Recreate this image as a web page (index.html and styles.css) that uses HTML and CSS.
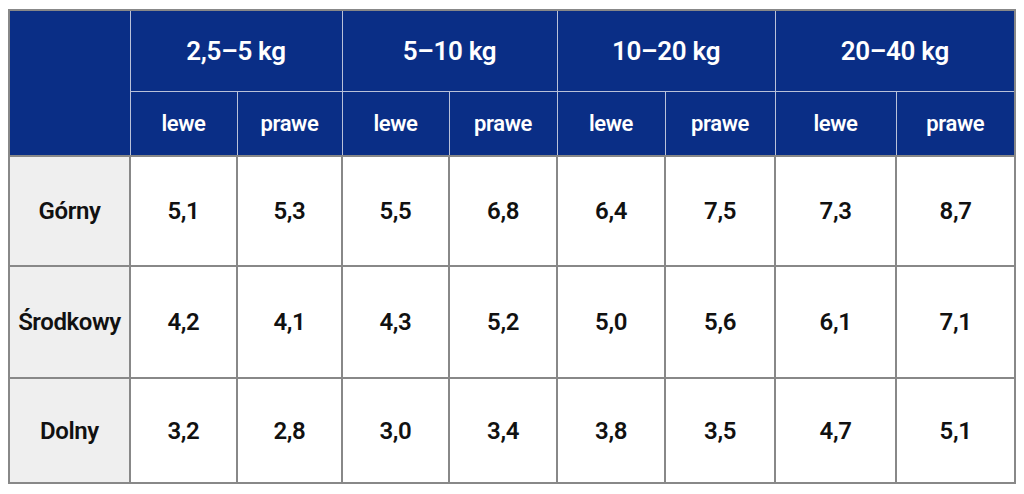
FILE: index.html
```html
<!DOCTYPE html>
<html lang="pl">
<head>
<meta charset="utf-8">
<title>Tabela</title>
<link rel="stylesheet" href="styles.css">
</head>
<body>
<table class="grid">
  <colgroup>
    <col class="c-label">
    <col class="c1"><col class="c2">
    <col class="c3"><col class="c4">
    <col class="c5"><col class="c6">
    <col class="c7"><col class="c8">
  </colgroup>
  <thead>
    <tr class="row-group">
      <th class="corner" rowspan="2"></th>
      <th class="group" colspan="2">2,5–5 kg</th>
      <th class="group" colspan="2">5–10 kg</th>
      <th class="group" colspan="2">10–20 kg</th>
      <th class="group" colspan="2">20–40 kg</th>
    </tr>
    <tr class="row-side">
      <th class="side">lewe</th><th class="side">prawe</th>
      <th class="side">lewe</th><th class="side">prawe</th>
      <th class="side">lewe</th><th class="side">prawe</th>
      <th class="side">lewe</th><th class="side">prawe</th>
    </tr>
  </thead>
  <tbody>
    <tr class="r1">
      <th class="label">Górny</th>
      <td>5,1</td><td>5,3</td><td>5,5</td><td>6,8</td><td>6,4</td><td>7,5</td><td>7,3</td><td>8,7</td>
    </tr>
    <tr class="r2">
      <th class="label">Środkowy</th>
      <td>4,2</td><td>4,1</td><td>4,3</td><td>5,2</td><td>5,0</td><td>5,6</td><td>6,1</td><td>7,1</td>
    </tr>
    <tr class="r3">
      <th class="label">Dolny</th>
      <td>3,2</td><td>2,8</td><td>3,0</td><td>3,4</td><td>3,8</td><td>3,5</td><td>4,7</td><td>5,1</td>
    </tr>
  </tbody>
</table>
</body>
</html>
```
FILE: styles.css
```css
html, body {
  margin: 0;
  padding: 0;
  background: #ffffff;
}
body {
  padding: 9px 8px 0 8px;
  font-family: Roboto, "Liberation Sans", sans-serif;
}
.grid {
  border-collapse: collapse;
  table-layout: fixed;
  width: 1006px;
  border: 2px solid #888888;
}
.c-label { width: 121px; }
.c1 { width: 107px; }
.c2 { width: 105px; }
.c3 { width: 107px; }
.c4 { width: 108px; }
.c5 { width: 108px; }
.c6 { width: 110px; }
.c7 { width: 121px; }
.c8 { width: 119px; }

thead th {
  background: #0a2e86;
  color: #ffffff;
  font-weight: 600;
  text-align: center;
  padding: 0;
  border: 1px solid #b9c1d9;
}
thead th.corner {
  border-top-color: #888888;
  border-left-color: #888888;
}
.row-group th { border-top: 2px solid #888888; }
.row-group { height: 81px; }
.row-side { height: 65px; }
.group { font-size: 26px; letter-spacing: -0.3px; }
.side { font-size: 22px; letter-spacing: -0.4px; }

tbody td, tbody th {
  border: 2px solid #888888;
  text-align: center;
  padding: 0;
  color: #111111;
  font-size: 24px;
  letter-spacing: -0.4px;
  font-weight: 600;
  background: #ffffff;
}
tbody th.label {
  background: #efefef;
}
.r1 { height: 110px; }
.r2 { height: 112px; }
.r3 { height: 105px; }
```
